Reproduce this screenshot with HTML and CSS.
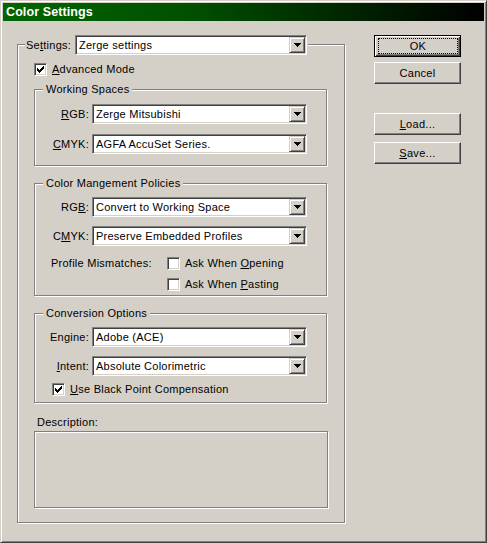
FILE: index.html
```html
<!DOCTYPE html>
<html>
<head>
<meta charset="utf-8">
<title>Color Settings</title>
<link rel="stylesheet" href="styles.css">
</head>
<body>
<div class="window">
  <div class="titlebar">Color Settings</div>
  <div class="client">
    <div class="group main-group">
      <div class="legend main-legend">
        <span class="settings-label">Se<u>t</u>tings:</span>
        <div class="combo combo-wide"><span class="value">Zerge settings</span><span class="drop"><svg width="7" height="4" viewBox="0 0 7 4"><path d="M0 0h7v1H0zM1 1h5v1H1zM2 2h3v1H2zM3 3h1v1H3z"/></svg></span></div>
      </div>

      <div class="check-row adv-row">
        <span class="checkbox"><svg width="7" height="7" viewBox="0 0 7 7"><path d="M6 0h1v1H6zM5 1h2v1H5zM0 2h1v1H0zM4 2h3v1H4zM0 3h2v1H0zM3 3h3v1H3zM0 4h5v1H0zM1 5h3v1H1zM2 6h1v1H2z"/></svg></span>
        <span class="check-label"><u>A</u>dvanced Mode</span>
      </div>

      <div class="group inner ws">
        <div class="legend">Working Spaces</div>
        <div class="field ws-f1">
          <span class="field-label"><u>R</u>GB:</span>
          <div class="combo"><span class="value">Zerge Mitsubishi</span><span class="drop"><svg width="7" height="4" viewBox="0 0 7 4"><path d="M0 0h7v1H0zM1 1h5v1H1zM2 2h3v1H2zM3 3h1v1H3z"/></svg></span></div>
        </div>
        <div class="field ws-f2">
          <span class="field-label"><u>C</u>MYK:</span>
          <div class="combo"><span class="value">AGFA AccuSet Series.</span><span class="drop"><svg width="7" height="4" viewBox="0 0 7 4"><path d="M0 0h7v1H0zM1 1h5v1H1zM2 2h3v1H2zM3 3h1v1H3z"/></svg></span></div>
        </div>
      </div>

      <div class="group inner cm">
        <div class="legend">Color Mangement Policies</div>
        <div class="field cm-f1">
          <span class="field-label">RG<u>B</u>:</span>
          <div class="combo"><span class="value">Convert to Working Space</span><span class="drop"><svg width="7" height="4" viewBox="0 0 7 4"><path d="M0 0h7v1H0zM1 1h5v1H1zM2 2h3v1H2zM3 3h1v1H3z"/></svg></span></div>
        </div>
        <div class="field cm-f2">
          <span class="field-label">C<u>M</u>YK:</span>
          <div class="combo"><span class="value">Preserve Embedded Profiles</span><span class="drop"><svg width="7" height="4" viewBox="0 0 7 4"><path d="M0 0h7v1H0zM1 1h5v1H1zM2 2h3v1H2zM3 3h1v1H3z"/></svg></span></div>
        </div>
        <div class="check-row mismatch-row">
          <span class="mismatch-label">Profile Mismatches:</span>
          <span class="checkbox empty"></span>
          <span class="check-label">Ask When <u>O</u>pening</span>
        </div>
        <div class="check-row paste-row">
          <span class="checkbox empty"></span>
          <span class="check-label">Ask When <u>P</u>asting</span>
        </div>
      </div>

      <div class="group inner co">
        <div class="legend">Conversion Options</div>
        <div class="field co-f1">
          <span class="field-label">En<u>g</u>ine:</span>
          <div class="combo"><span class="value">Adobe (ACE)</span><span class="drop"><svg width="7" height="4" viewBox="0 0 7 4"><path d="M0 0h7v1H0zM1 1h5v1H1zM2 2h3v1H2zM3 3h1v1H3z"/></svg></span></div>
        </div>
        <div class="field co-f2">
          <span class="field-label"><u>I</u>ntent:</span>
          <div class="combo"><span class="value">Absolute Colorimetric</span><span class="drop"><svg width="7" height="4" viewBox="0 0 7 4"><path d="M0 0h7v1H0zM1 1h5v1H1zM2 2h3v1H2zM3 3h1v1H3z"/></svg></span></div>
        </div>
        <div class="check-row bpc-row">
          <span class="checkbox"><svg width="7" height="7" viewBox="0 0 7 7"><path d="M6 0h1v1H6zM5 1h2v1H5zM0 2h1v1H0zM4 2h3v1H4zM0 3h2v1H0zM3 3h3v1H3zM0 4h5v1H0zM1 5h3v1H1zM2 6h1v1H2z"/></svg></span>
          <span class="check-label"><u>U</u>se Black Point Compensation</span>
        </div>
      </div>

      <div class="desc-label">Description:</div>
      <div class="group desc-box"></div>
    </div>

    <div class="buttons">
      <div class="btn default"><span class="focus">OK</span></div>
      <div class="btn cancel">Cancel</div>
      <div class="btn load"><span><u>L</u>oad...</span></div>
      <div class="btn save"><span><u>S</u>ave...</span></div>
    </div>
  </div>
</div>
</body>
</html>
```

FILE: styles.css
```css
html, body {
  margin: 0;
  padding: 0;
  background: #d4d0c8;
}

body {
  font-family: "Liberation Sans", Arial, sans-serif;
  font-size: 11px;
  letter-spacing: 0.25px;
  color: #000;
  line-height: 13px;
}

u {
  text-decoration: underline;
  text-underline-offset: 1px;
}

.window {
  width: 487px;
  height: 543px;
  box-sizing: border-box;
  border: 1px solid;
  border-color: #d4d0c8 #404040 #404040 #d4d0c8;
  box-shadow: inset 1px 1px 0 #fff, inset -1px -1px 0 #808080;
  padding: 2px;
  background: #d4d0c8;
  display: flex;
  flex-direction: column;
}

.titlebar {
  height: 18px;
  flex: none;
  background: linear-gradient(to right, #006600 0%, #004f00 40%, #000 100%);
  color: #fff;
  font-weight: bold;
  font-size: 12.5px;
  letter-spacing: 0.1px;
  line-height: 18px;
  padding-left: 3px;
}

.client {
  flex: 1;
  display: flex;
  align-items: flex-start;
  padding: 14px 0 0 14px;
}

/* etched group frame */
.group {
  box-sizing: border-box;
  border: 1px solid #808080;
  box-shadow: 1px 1px 0 #fff, inset 1px 1px 0 #fff;
}

.main-group {
  width: 328px;
  height: 479px;
  margin-top: 9px;
  padding-left: 16px;
  display: flex;
  flex-direction: column;
}

.legend {
  width: fit-content;
  background: #d4d0c8;
  padding: 0 3px;
  margin: -7px 0 0 8px;
  height: 13px;
  white-space: nowrap;
}

.main-legend {
  display: flex;
  align-items: center;
  height: 20px;
  padding: 0 1px;
  margin: -10px 0 0 -9px;
}

.settings-label {
  width: 49px;
  flex: none;
}

/* combobox */
.combo {
  width: 215px;
  height: 20px;
  box-sizing: border-box;
  border: 1px solid;
  border-color: #808080 #fff #fff #808080;
  box-shadow: inset 1px 1px 0 #404040, inset -1px -1px 0 #d4d0c8;
  padding: 1px;
  background: #fff;
  display: flex;
  flex: none;
}

.combo-wide {
  width: 232px;
}

.combo .value {
  flex: 1;
  padding-left: 2px;
  line-height: 16px;
  white-space: nowrap;
  overflow: hidden;
}

.drop {
  width: 16px;
  height: 16px;
  box-sizing: border-box;
  border: 1px solid;
  border-color: #d4d0c8 #404040 #404040 #d4d0c8;
  box-shadow: inset 1px 1px 0 #fff, inset -1px -1px 0 #808080;
  background: #d4d0c8;
  display: flex;
  align-items: center;
  justify-content: center;
  flex: none;
}

.drop svg,
.checkbox svg {
  display: block;
  shape-rendering: crispEdges;
  fill: #000;
}

/* checkbox */
.check-row {
  display: flex;
  align-items: center;
  height: 13px;
}

.checkbox {
  width: 13px;
  height: 13px;
  box-sizing: border-box;
  border: 1px solid;
  border-color: #808080 #fff #fff #808080;
  box-shadow: inset 1px 1px 0 #404040, inset -1px -1px 0 #d4d0c8;
  background: #fff;
  display: flex;
  align-items: center;
  justify-content: center;
  flex: none;
  margin-right: 5px;
}

.check-label {
  white-space: nowrap;
}

.adv-row {
  margin-top: 8px;
}

/* inner groups */
.inner {
  width: 293px;
  flex: none;
}

.field {
  display: flex;
  align-items: center;
  height: 20px;
}

.field-label {
  width: 54px;
  margin-right: 3px;
  text-align: right;
  flex: none;
  white-space: nowrap;
}

.ws {
  height: 77px;
  margin-top: 13px;
}

.ws-f1 { margin-top: 8px; }
.ws-f2 { margin-top: 10px; }

.cm {
  height: 113px;
  margin-top: 17px;
}

.cm-f1 { margin-top: 7px; }
.cm-f2 { margin-top: 9px; }

.mismatch-row {
  margin-top: 11px;
  padding-left: 16px;
}

.mismatch-label {
  width: 116px;
  flex: none;
  white-space: nowrap;
}

.paste-row {
  margin-top: 8px;
  padding-left: 132px;
}

.co {
  height: 90px;
  margin-top: 17px;
}

.co-f1 { margin-top: 7px; }
.co-f2 { margin-top: 9px; }

.bpc-row {
  margin-top: 7px;
  padding-left: 17px;
}

.desc-label {
  margin-top: 13px;
  margin-left: 3px;
}

.desc-box {
  width: 294px;
  height: 77px;
  margin-top: 2px;
  flex: none;
}

/* buttons */
.buttons {
  margin-left: 29px;
  display: flex;
  flex-direction: column;
}

.btn {
  width: 87px;
  height: 22px;
  box-sizing: border-box;
  border: 1px solid;
  border-color: #fff #404040 #404040 #fff;
  box-shadow: inset -1px -1px 0 #808080, inset 1px 1px 0 #d4d0c8;
  display: flex;
  align-items: center;
  justify-content: center;
  letter-spacing: 0.3px;
}

.btn.default {
  border: 1px solid #000;
  box-shadow: inset 1px 1px 0 #fff, inset -1px -1px 0 #404040, inset 2px 2px 0 #d4d0c8, inset -2px -2px 0 #808080;
  padding: 2px 2px 2px 3px;
}

.btn .focus {
  flex: 1;
  align-self: stretch;
  border: 1px dotted #000;
  display: flex;
  align-items: center;
  justify-content: center;
  margin: 0;
}

.cancel { margin-top: 5px; }
.load { margin-top: 29px; }
.save { margin-top: 7px; }
```
